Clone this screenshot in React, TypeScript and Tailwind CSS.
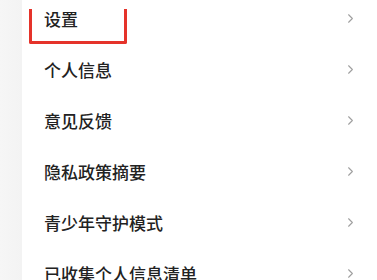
import { ChevronRight } from 'lucide-react';

const items = ['设置', '个人信息', '意见反馈', '隐私政策摘要', '青少年守护模式', '已收集个人信息清单'];

const MenuRow = ({ label, highlighted }: { label: string; highlighted?: boolean }) => (
  <div className="relative flex h-[51px] items-center justify-between pl-[22px] pr-[19px]">
    <span className="text-[17px] font-medium leading-none text-[#222222]">{label}</span>
    <ChevronRight className="h-[15px] w-[15px] text-[#a0a0a0]" strokeWidth={1.75} />
    {highlighted && (
      <div className="absolute left-[7px] top-[16px] h-[35px] w-[98px] rounded-b-[2px] border-x-[3px] border-b-[3px] border-[#e5332a]" />
    )}
  </div>
);

export default function App() {
  return (
    <div
      className="flex h-[280px] w-[377px] overflow-hidden bg-white"
      style={{ fontFamily: '"Noto Sans CJK SC", "Noto Sans", sans-serif' }}
    >
      <div className="w-[22px] shrink-0 bg-gradient-to-r from-[#f6f6f6] to-[#f3f3f3]" />
      <div className="flex-1 -mt-[7px]">
        {items.map((label, i) => (
          <MenuRow key={label} label={label} highlighted={i === 0} />
        ))}
      </div>
    </div>
  );
}
